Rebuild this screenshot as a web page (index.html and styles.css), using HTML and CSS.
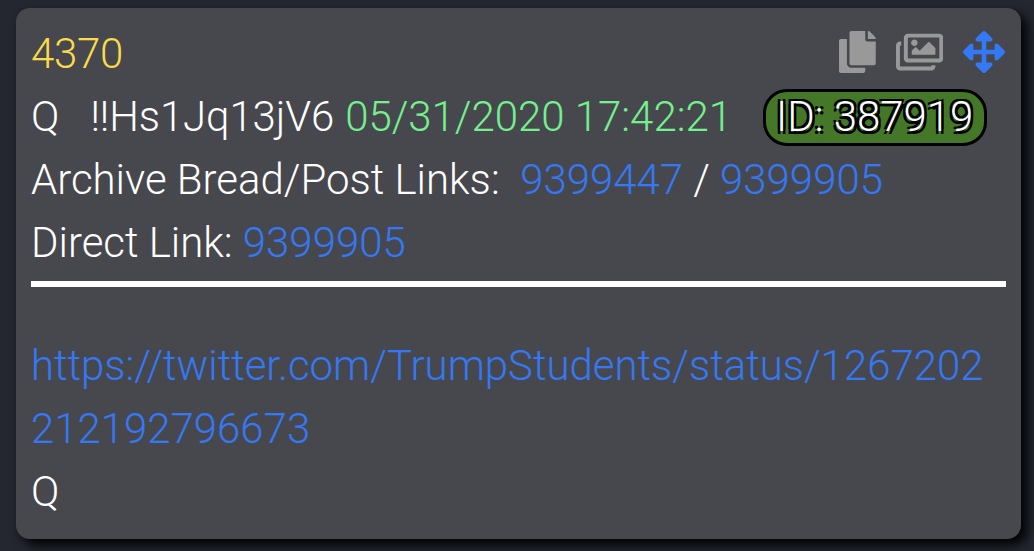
FILE: index.html
```html
<!DOCTYPE html>
<html lang="en">
<head>
  <meta charset="UTF-8">
  <meta name="viewport" content="width=device-width, initial-scale=1.0">
  <title>Post 4370</title>
  <link rel="stylesheet" href="styles.css">
</head>
<body>
  <article class="post">
    <!-- Post number and actions -->
    <header class="post-header">
      <span class="post-number">4370</span>
      <div class="post-actions">
        <svg class="icon icon-copy" viewBox="0 0 448 512"><path d="M320 448v40c0 13.255-10.745 24-24 24H24c-13.255 0-24-10.745-24-24V120c0-13.255 10.745-24 24-24h72v296c0 30.879 25.121 56 56 56h168zm0-344V0H152c-13.255 0-24 10.745-24 24v368c0 13.255 10.745 24 24 24h272c13.255 0 24-10.745 24-24V128H344c-13.2 0-24-10.8-24-24zm120.971-31.029L375.029 7.029A24 24 0 0 0 358.059 0H352v96h96v-6.059a24 24 0 0 0-7.029-16.97z"/></svg>
        <svg class="icon icon-images" viewBox="0 0 576 512"><path d="M480 416v16c0 26.51-21.49 48-48 48H48c-26.51 0-48-21.49-48-48V176c0-26.51 21.49-48 48-48h16v48H54a6 6 0 0 0-6 6v244a6 6 0 0 0 6 6h372a6 6 0 0 0 6-6v-10h48zm42-336H150a6 6 0 0 0-6 6v244a6 6 0 0 0 6 6h372a6 6 0 0 0 6-6V86a6 6 0 0 0-6-6zm6-48c26.51 0 48 21.490 48 48v256c0 26.510-21.490 48-48 48H144c-26.510 0-48-21.490-48-48V80c0-26.510 21.490-48 48-48h384zM264 144c0 22.091-17.909 40-40 40s-40-17.909-40-40 17.909-40 40-40 40 17.909 40 40zm-72 96l39.515-39.515c4.686-4.686 12.284-4.686 16.971 0L288 240l103.515-103.515c4.686-4.686 12.284-4.686 16.971 0L480 208v80H192v-48z"/></svg>
        <svg class="icon icon-move" viewBox="0 0 512 512"><path d="M352.201 425.775l-79.196 79.196c-9.373 9.373-24.568 9.373-33.941 0l-79.196-79.196c-15.119-15.119-4.411-40.971 16.971-40.970h51.162L228 284H127.196v51.162c0 21.382-25.851 32.090-40.971 16.971L7.029 272.937c-9.373-9.373-9.373-24.569 0-33.941L86.225 159.800c15.119-15.119 40.971-4.411 40.971 16.971V228H228V127.196h-51.230c-21.382 0-32.090-25.851-16.971-40.971l79.196-79.196c9.373-9.373 24.568-9.373 33.941 0l79.196 79.196c15.119 15.119 4.411 40.971-16.971 40.971h-51.162V228h100.804v-51.162c0-21.382 25.851-32.090 40.970-16.971l79.196 79.196c9.373 9.373 9.373 24.569 0 33.941L425.773 352.200c-15.119 15.119-40.971 4.411-40.970-16.971V284H284v100.804h51.230c21.382 0 32.090 25.851 16.971 40.971z"/></svg>
      </div>
    </header>

    <!-- Post details -->
    <div class="post-meta">
      <div class="line byline">
        <span class="author">Q</span>
        <span class="trip">!!Hs1Jq13jV6</span>
        <time class="date">05/31/2020 17:42:21</time>
        <span class="user-id">ID: 387919</span>
      </div>
      <div class="line">Archive Bread/Post Links:&nbsp; <a href="#">9399447</a> / <a href="#">9399905</a></div>
      <div class="line">Direct Link: <a href="#">9399905</a></div>
    </div>

    <!-- Post body -->
    <div class="post-body">
      <a class="post-link" href="#">https://twitter.com/TrumpStudents/status/1267202212192796673</a>
      <div>Q</div>
    </div>
  </article>
</body>
</html>
```
FILE: styles.css
```css
* {
  box-sizing: border-box;
}

body {
  margin: 0;
  height: 551px;
  padding: 8px 13px 12px 16px;
  background: #242730;
  color: #fff;
  font-family: Roboto, sans-serif;
  font-size: 41.95px;
  font-weight: 300;
  line-height: 63px;
  overflow: hidden;
}

a {
  color: #3478f6;
  text-decoration: none;
}

/* Card */
.post {
  height: 531px;
  padding: 14px 15px;
  background: #47484d;
  border-radius: 14px;
  box-shadow: 6px 6px 12px #000;
}

/* Header */
.post-header {
  display: flex;
  justify-content: space-between;
  height: 63px;
}

.post-number {
  color: #fbdb4a;
  letter-spacing: -0.3px;
}

.post-actions {
  display: flex;
  align-items: center;
  gap: 20px;
  height: 60px;
  padding-right: 1px;
}

.icon {
  height: 42px;
  fill: #999;
}

.icon-move {
  fill: #3478f6;
}

/* Details */
.post-meta {
  height: 202px;
  border-bottom: 6px solid #fff;
}

.line {
  white-space: nowrap;
}

.byline {
  display: flex;
  align-items: center;
  height: 63px;
}

.trip {
  margin-left: 31px;
  letter-spacing: -0.1px;
}

.date {
  margin-left: 11px;
  color: #74f08f;
}

.user-id {
  height: 57px;
  margin: 2px 0 0 31px;
  padding: 0 11px 0 10px;
  border: 3px solid #000;
  border-radius: 24px;
  background: #447828;
  line-height: 50px;
  text-shadow: 2.5px 2.5px 0 #000, -2.5px -2.5px 0 #000, 2.5px -2.5px 0 #000, -2.5px 2.5px 0 #000;
}

/* Body */
.post-body {
  padding-top: 47px;
}

.post-link {
  display: block;
  word-break: break-all;
}
```
